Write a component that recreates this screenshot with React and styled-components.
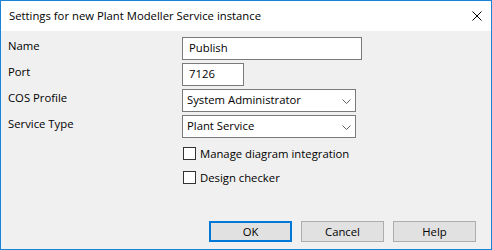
import React from "react";
import styled, { createGlobalStyle } from "styled-components";

const Global = createGlobalStyle`
  html, body { margin: 0; padding: 0; background: #ffffff; }
  * { box-sizing: border-box; }
  body { font-family: "Open Sans", "Noto Sans", sans-serif; font-size: 11.3px; color: #000; }
`;

const Window = styled.div`
  width: 492px;
  height: 250px;
  border: 1px solid #1883d7;
  display: flex;
  flex-direction: column;
  background: #f0f0f0;
`;

const TitleBar = styled.div`
  height: 30px;
  background: #ffffff;
  display: flex;
  align-items: center;
  justify-content: space-between;
  padding: 0 9px 0 8px;
`;

const Title = styled.span`
  font-size: 11.3px;
  line-height: 16px;
  margin-top: -1px;
`;

const CloseIcon = styled.svg`
  width: 10px;
  height: 10px;
  display: block;
`;

const Body = styled.div`
  flex: 1;
  display: flex;
  flex-direction: column;
  padding: 6px 15px 7px 7px;
`;

const Form = styled.div`
  display: grid;
  grid-template-columns: 174px auto;
  grid-auto-rows: 23px;
  row-gap: 3px;
`;

const Label = styled.div`
  line-height: 16px;
  padding-top: 1px;
`;

const Field = styled.div`
  width: ${(p) => p.$w}px;
  height: 23px;
  border: 1px solid #7a7a7a;
  background: #ffffff;
  display: flex;
  align-items: center;
  justify-content: space-between;
  padding: 0 ${(p) => (p.$select ? 4 : 6)}px 1px ${(p) => (p.$select ? 4 : 6)}px;
  line-height: 16px;
`;

const Chevron = styled.svg`
  width: 9px;
  height: 5px;
  display: block;
  margin-top: 2px;
`;

const Checks = styled.div`
  display: flex;
  flex-direction: column;
  gap: 11px;
  margin: 9px 0 0 175px;
`;

const CheckRow = styled.label`
  display: flex;
  align-items: center;
  gap: 4px;
  height: 13px;
  line-height: 16px;
`;

const Box = styled.span`
  width: 13px;
  height: 13px;
  border: 1px solid #333333;
  background: #ffffff;
  flex: none;
`;

const Footer = styled.div`
  margin-top: auto;
  display: flex;
  justify-content: flex-end;
  gap: 9px;
`;

const Button = styled.button`
  width: 83px;
  height: 21px;
  font: inherit;
  color: #000;
  background: #e1e1e1;
  border: ${(p) => (p.$default ? "2px solid #0078d7" : "1px solid #adadad")};
  padding: 0;
  line-height: 16px;
`;

function Select({ value, w }) {
  return (
    <Field $w={w} $select>
      <span>{value}</span>
      <Chevron viewBox="0 0 9 5">
        <polyline points="0.5,0.5 4.5,4.5 8.5,0.5" fill="none" stroke="#606060" strokeWidth="1" />
      </Chevron>
    </Field>
  );
}

export default function App() {
  return (
    <>
      <Global />
      <Window>
        <TitleBar>
          <Title>Settings for new Plant Modeller Service instance</Title>
          <CloseIcon viewBox="0 0 10 10">
            <path d="M0.5 0.5 L9.5 9.5 M9.5 0.5 L0.5 9.5" stroke="#000" strokeWidth="1" />
          </CloseIcon>
        </TitleBar>
        <Body>
          <Form>
            <Label>Name</Label>
            <Field $w={180}>Publish</Field>
            <Label>Port</Label>
            <Field $w={62}>7126</Field>
            <Label>COS Profile</Label>
            <Select value="System Administrator" w={174} />
            <Label>Service Type</Label>
            <Select value="Plant Service" w={174} />
          </Form>
          <Checks>
            <CheckRow><Box />Manage diagram integration</CheckRow>
            <CheckRow><Box />Design checker</CheckRow>
          </Checks>
          <Footer>
            <Button $default>OK</Button>
            <Button>Cancel</Button>
            <Button>Help</Button>
          </Footer>
        </Body>
      </Window>
    </>
  );
}
